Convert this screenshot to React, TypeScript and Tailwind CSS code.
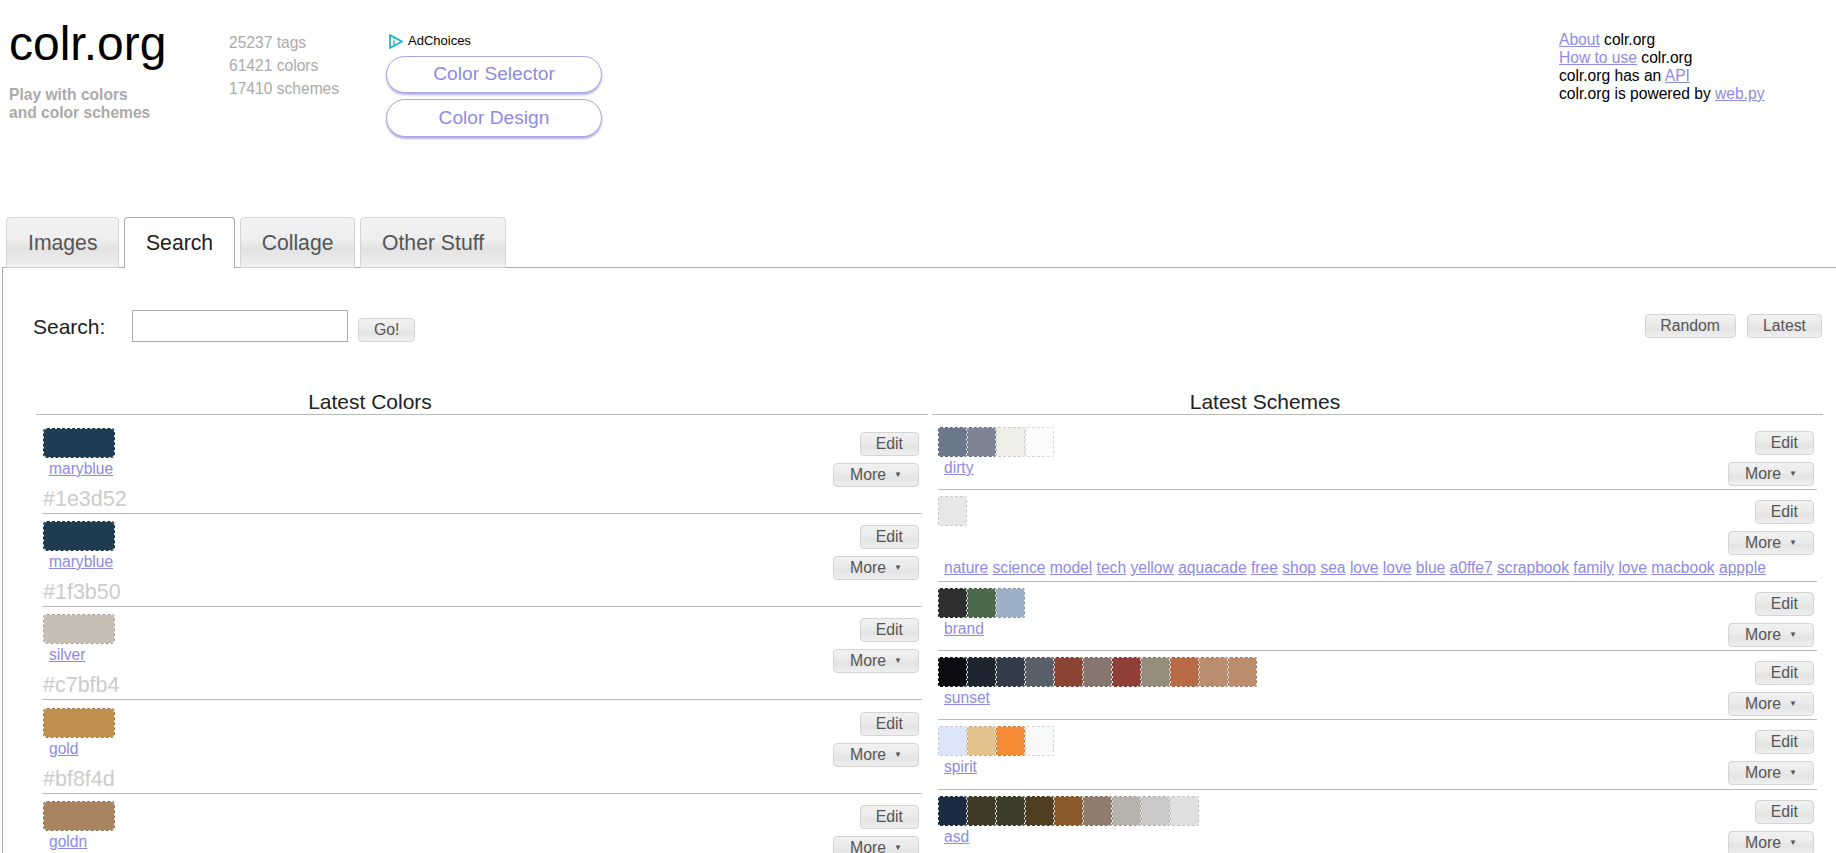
const linkClass = "text-[#8e8ae6] underline";

const btnClass =
	"flex h-[24px] items-center rounded-[4px] border border-[#d4d4d4] bg-[linear-gradient(#f1f1f1,#ebebeb_45%,#e3e3e3_60%,#efefef)] text-[15.8px] text-[#555]";

const tabClass =
	"flex h-[51px] items-center rounded-t-[4px] border border-[#d4d4d4] bg-[linear-gradient(#f3f3f3,#eeeeee_45%,#e2e2e2_62%,#f0f0f0)] px-[21px] text-[#555]";

const colors = [
	{ name: "maryblue", hex: "#1e3d52" },
	{ name: "maryblue", hex: "#1f3b50" },
	{ name: "silver", hex: "#c7bfb4" },
	{ name: "gold", hex: "#bf8f4d" },
	{ name: "goldn", hex: "#a88560" },
];

const tags = [
	"nature", "science", "model", "tech", "yellow", "aquacade", "free", "shop", "sea", "love", "love",
	"blue", "a0ffe7", "scrapbook", "family", "love", "macbook", "appple",
];

const schemes = [
	{ name: "dirty", swatches: ["#6b7889", "#7d8594", "#eeede8", "#fbfcfc"] },
	{ name: "", swatches: ["#e8e8e8"] },
	{ name: "brand", swatches: ["#2e2d2f", "#4a6a4b", "#9bb0c6"] },
	{
		name: "sunset",
		swatches: ["#0a0c12", "#1c2530", "#323d49", "#5a6069", "#8a4535", "#85776f", "#8f3f36", "#968c7c", "#b96b45", "#b98f70", "#bb8d6c"],
	},
	{ name: "spirit", swatches: ["#dbe6fa", "#e3c28c", "#f48b35", "#f8fafa"] },
	{ name: "asd", swatches: ["#1b2b42", "#3e3a26", "#3d3d2b", "#503e20", "#8b5a2b", "#907c6d", "#b8b2ad", "#c9c9c9", "#e0e0e0"] },
];

// dashes of a swatch are a darker tone of its own colour
const shade = (hex: string) => {
	const n = parseInt(hex.slice(1), 16);
	const r = Math.round(((n >> 16) & 255) * 0.85);
	const g = Math.round(((n >> 8) & 255) * 0.85);
	const b = Math.round((n & 255) * 0.85);
	return `rgb(${r},${g},${b})`;
};

const Buttons = () => {
	return (
		<div className="flex flex-col items-end gap-y-[7px] pt-[4px] pr-[3px]">
			<button className={`${btnClass} pl-[15px] pr-[15px]`}>Edit</button>
			<button className={`${btnClass} pl-[16px] pr-[16px]`}>
				More
				<span className="ml-[8px] text-[8px]">▼</span>
			</button>
		</div>
	);
};

const Swatches = ({ list }: { list: string[] }) => {
	return (
		<div className="flex flex-row">
			{list.map((c, i) => (
				<div
					key={i}
					className="h-[30px] w-[29px] rounded-[2px] border border-dashed bg-clip-padding"
					style={{ backgroundColor: c, borderColor: shade(c) }}
				/>
			))}
		</div>
	);
};

const App = () => {
	return (
		<div className="h-[853px] w-full overflow-hidden bg-white [font-family:'Liberation_Sans',Arial,sans-serif] text-black">
			{/* header */}
			<div className="flex h-[217px] flex-row">
				<div className="w-[229px] pl-[9px] pt-[18px]">
					<div className="text-[48px] leading-[52px]">colr.org</div>
					<div className="mt-[16px] text-[15.6px] font-bold leading-[18px] text-[#aaa]">
						Play with colors
						<br />
						and color schemes
					</div>
				</div>
				<div className="w-[157px] pt-[31px] text-[15.6px] leading-[23px] text-[#aaa]">
					<div>25237 tags</div>
					<div>61421 colors</div>
					<div>17410 schemes</div>
				</div>
				<div className="w-[216px] pt-[33px]">
					<div className="flex h-[16px] flex-row items-center pl-[3px] text-[13px] leading-[16px]">
						<svg width="14" height="15" viewBox="0 0 14 15" fill="none" className="mr-[5px]">
							<path d="M1 1 L13 7.5 L1 14 Z" stroke="#1fb3c4" strokeWidth="1.8" strokeLinejoin="round" />
							<path d="M5 6.5 V11 M5 3.8 V5" stroke="#1fb3c4" strokeWidth="1.4" />
						</svg>
						AdChoices
					</div>
					<div className="mt-[7px] flex flex-col gap-y-[6px]">
						<div className="flex h-[37px] items-center justify-center rounded-full border border-[#a9a5e6] bg-white text-[19.2px] text-[#8e8ae6] shadow-[0_2px_2px_rgba(110,100,200,0.5)]">
							Color Selector
						</div>
						<div className="flex h-[38px] items-center justify-center rounded-full border border-[#a9a5e6] bg-white text-[19.2px] text-[#8e8ae6] shadow-[0_2px_2px_rgba(110,100,200,0.5)]">
							Color Design
						</div>
					</div>
				</div>
				<div className="ml-auto w-[277px] pt-[31px] text-[15.6px] leading-[18px]">
					<div>
						<a className={linkClass}>About</a> colr.org
					</div>
					<div>
						<a className={linkClass}>How to use</a> colr.org
					</div>
					<div>
						colr.org has an <a className={linkClass}>API</a>
					</div>
					<div>
						colr.org is powered by <a className={linkClass}>web.py</a>
					</div>
				</div>
			</div>

			{/* tabs */}
			<div className="relative z-10 -mb-px flex flex-row gap-x-[4.5px] pl-[6px] text-[21.2px]">
				<div className={tabClass}>Images</div>
				<div className="flex h-[51px] items-center rounded-t-[4px] border border-b-0 border-[#aaa] bg-white px-[21px] text-[#222]">
					Search
				</div>
				<div className={tabClass}>Collage</div>
				<div className={tabClass}>Other Stuff</div>
			</div>

			{/* panel */}
			<div className="ml-[2px] border-l border-t border-[#aaa]">
				<div className="flex flex-row items-start pl-[30px] pr-[14px] pt-[42px]">
					<div className="w-[99px] pt-[1px] text-[21px] leading-[31px] text-[#222]">Search:</div>
					<input className="h-[32px] w-[216px] border border-[#aaa] bg-white" />
					<button className={`${btnClass} ml-[10px] mt-[8px] pl-[15px] pr-[15px]`}>Go!</button>
					<div className="ml-auto mt-[4px] flex flex-row gap-x-[11px]">
						<button className={`${btnClass} pl-[14.5px] pr-[15px]`}>Random</button>
						<button className={`${btnClass} pl-[15px] pr-[15px]`}>Latest</button>
					</div>
				</div>

				<div className="flex flex-row gap-x-[4px] pl-[33px]">
					{/* colors */}
					<div className="w-[892px]">
						<div className="mt-[46px] border-b border-[#bbb] pt-[1px] pr-[224px] text-center text-[21px] leading-[25px] text-[#222]">
							Latest Colors
						</div>
						<div className="mx-[6px] pt-[6px]">
							{colors.map((c, i) => (
								<div
									key={i}
									className={`flex flex-row justify-between border-b border-[#bbb] pb-[2px] ${c.name === "gold" ? "pt-[8px]" : "pt-[7px]"}`}
								>
									<div className="pl-[1px]">
										<div
											className="h-[30px] w-[72px] rounded-[4px] border border-dashed bg-clip-padding"
											style={{ backgroundColor: c.hex, borderColor: shade(c.hex) }}
										/>
										<div className="mt-[1px] pl-[6px] text-[15.6px] leading-[20px]">
											<a className={linkClass}>{c.name}</a>
										</div>
										<div className="mt-[8px] text-[21.5px] leading-[24px] text-[#ccc]">{c.hex}</div>
									</div>
									<Buttons />
								</div>
							))}
						</div>
					</div>

					{/* schemes */}
					<div className="w-[891px]">
						<div className="mt-[46px] border-b border-[#bbb] pt-[1px] pr-[225px] text-center text-[21px] leading-[25px] text-[#222]">
							Latest Schemes
						</div>
						<div className="mx-[6px] pt-[6px]">
							{schemes.map((s, i) =>
								s.name === "" ? (
									<div key={i} className="border-b border-[#bbb] pt-[6px] pb-[3px]">
										<div className="flex flex-row justify-between">
											<Swatches list={s.swatches} />
											<Buttons />
										</div>
										<div className="mt-[3px] whitespace-nowrap pl-[6px] text-[15.6px] leading-[20px]">
											{tags.map((t, j) => (
												<span key={j}>
													<a className={linkClass}>{t}</a>{" "}
												</span>
											))}
										</div>
									</div>
								) : (
									<div
										key={i}
										className={`flex flex-row justify-between border-b border-[#bbb] pt-[6px] ${s.name === "spirit" ? "pb-[12px]" : "pb-[11px]"}`}
									>
										<div>
											<Swatches list={s.swatches} />
											<div className="mt-[1px] pl-[6px] text-[15.6px] leading-[20px]">
												<a className={linkClass}>{s.name}</a>
											</div>
										</div>
										<div className="-mb-[12px]">
											<Buttons />
										</div>
									</div>
								),
							)}
						</div>
					</div>
				</div>
			</div>
		</div>
	);
};

export default App;
